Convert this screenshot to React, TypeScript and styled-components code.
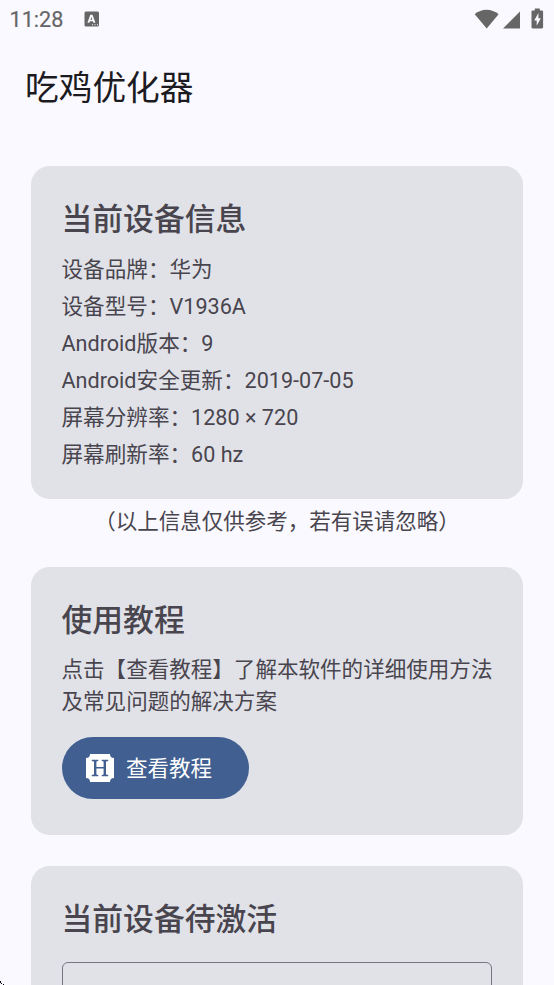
import React from 'react';
import styled, { createGlobalStyle } from 'styled-components';

const GlobalStyle = createGlobalStyle`
  * { box-sizing: border-box; }
  html, body { margin: 0; background: #faf9ff; }
  body {
    overflow: hidden;
    font-family: Roboto, "Noto Sans CJK SC", sans-serif;
    color: #49454e;
    -webkit-font-smoothing: antialiased;
  }
`;

const Screen = styled.div`
  position: relative;
  height: 985px;
  overflow: hidden;
  display: flex;
  flex-direction: column;
`;

const StatusBar = styled.header`
  flex: none;
  height: 37px;
  padding: 0 10px 0 9.5px;
  display: flex;
  align-items: center;
  color: #666;
`;

const Clock = styled.span`
  width: 74.5px;
  font-size: 21.6px;
  font-weight: 400;
  -webkit-text-stroke: 0.2px currentColor;
  line-height: 37px;
  padding-top: 2px;
`;

const StatusIcons = styled.div`
  margin-left: auto;
  display: flex;
`;

const TopBar = styled.h1`
  flex: none;
  height: 98.5px;
  margin: 0;
  padding: 3px 25px 0;
  font-size: 33.7px;
  font-weight: 400;
  line-height: 98.5px;
  color: #1b1b21;
`;

const Content = styled.main`
  flex: none;
  padding: 30.5px 31px 0;
`;

const Card = styled.section<{ $height: number; $gap?: number }>`
  height: ${(p) => p.$height}px;
  margin-bottom: ${(p) => p.$gap ?? 0}px;
  padding: 32px 30.5px 0;
  border-radius: 18.5px;
  background: #e1e2e8;
`;

const CardTitle = styled.h2`
  margin: 0 0 10px;
  font-size: 30.8px;
  font-weight: 500;
  line-height: 43px;
`;

const InfoRow = styled.div`
  height: 37px;
  font-size: 21.6px;
  line-height: 37px;
  white-space: nowrap;
`;

const Note = styled.p`
  height: 68px;
  margin: 0;
  padding-top: 7px;
  font-size: 21.5px;
  line-height: 32px;
  text-align: center;
`;

const Paragraph = styled.p`
  margin: 12.5px -4px 20px 0;
  font-size: 21.55px;
  line-height: 31.5px;
`;

const TutorialButton = styled.button`
  display: flex;
  align-items: center;
  gap: 12px;
  width: 187.5px;
  height: 61.5px;
  padding: 0 0 0 24.5px;
  border: 0;
  border-radius: 31px;
  background: #415f91;
  color: #fff;
  font: inherit;
  font-size: 21.5px;
  line-height: 32px;
`;

const ButtonLabel = styled.span`
  padding-top: 2px;
`;

const CodeField = styled.input`
  display: block;
  width: 430.5px;
  height: 86px;
  margin-top: 21px;
  border: 1.5px solid #74777f;
  border-radius: 6px;
  background: transparent;
`;

const CornerMark = styled.svg`
  position: absolute;
  left: 0;
  bottom: 0;
`;

const deviceInfo: [string, string][] = [
  ['设备品牌', '华为'],
  ['设备型号', 'V1936A'],
  ['Android版本', '9'],
  ['Android安全更新', '2019-07-05'],
  ['屏幕分辨率', '1280 × 720'],
  ['屏幕刷新率', '60 hz'],
];

const KeyboardIcon = () => (
  <svg width="16" height="16" viewBox="0 0 16 16">
    <path
      fill="currentColor"
      fillRule="evenodd"
      d="M2 .5h11.5a1.5 1.5 0 0 1 1.5 1.5v12a1.5 1.5 0 0 1-1.5 1.5H2A1.5 1.5 0 0 1 .5 14V2A1.5 1.5 0 0 1 2 .5ZM6.3 3.8 3.4 11.8h2l.5-1.5h3l.5 1.5h2L8.5 3.8ZM7.4 6l.9 2.8H6.5ZM8 13.3v1h1v-1Zm2.5 0v1h1v-1Zm2.5 0v1h1v-1Z"
    />
  </svg>
);

const SystemIcons = () => (
  <svg width="70" height="22" viewBox="0 0 70 22" fill="currentColor">
    <path d="M.7 6.2C7.2.2 17.8.2 24.6 6.2L12.7 20.5Z" />
    <path d="M29 20.5 46 3.5v17Z" />
    <path
      fillRule="evenodd"
      d="M60.8.5h5v2h2.1c.7 0 1.2.5 1.2 1.2v15.6c0 .7-.5 1.2-1.2 1.2h-9.2c-.7 0-1.2-.5-1.2-1.2V3.7c0-.7.5-1.2 1.2-1.2h2.1ZM64.4 5l-4.2 7.5h2.5v5.2l4.1-7.5h-2.4Z"
    />
  </svg>
);

const TutorialIcon = () => (
  <svg width="28" height="28" viewBox="0 0 28 28">
    <path fill="#fff" d="M4 0h20a4 4 0 0 0 4 4v20a4 4 0 0 0-4 4H4a4 4 0 0 0-4-4V4a4 4 0 0 0 4-4Z" />
    <path
      fill="#415f91"
      d="M5.7 5.8h6.6v1.1l-1.9.5v5.7h7.2V7.4l-1.9-.5V5.8h6.6v1.1l-2.3.5v13.2l2.3.5v1.1h-6.6v-1.1l1.9-.5v-6.2h-7.2v6.2l1.9.5v1.1H5.7v-1.1l2.3-.5V7.4l-2.3-.5Z"
    />
  </svg>
);

export default function App() {
  return (
    <>
      <GlobalStyle />
      <Screen>
        <StatusBar>
          <Clock>11:28</Clock>
          <KeyboardIcon />
          <StatusIcons>
            <SystemIcons />
          </StatusIcons>
        </StatusBar>
        <TopBar>吃鸡优化器</TopBar>
        <Content>
          <Card $height={332.5}>
            <CardTitle>当前设备信息</CardTitle>
            {deviceInfo.map(([label, value]) => (
              <InfoRow key={label}>
                {label}：{value}
              </InfoRow>
            ))}
          </Card>
          <Note>（以上信息仅供参考，若有误请忽略）</Note>
          <Card $height={268} $gap={31}>
            <CardTitle>使用教程</CardTitle>
            <Paragraph>
              点击【查看教程】了解本软件的详细使用方法
              <br />
              及常见问题的解决方案
            </Paragraph>
            <TutorialButton>
              <TutorialIcon />
              <ButtonLabel>查看教程</ButtonLabel>
            </TutorialButton>
          </Card>
          <Card $height={320}>
            <CardTitle>当前设备待激活</CardTitle>
            <CodeField aria-label="激活码" />
          </Card>
        </Content>
        <CornerMark width="4" height="4" viewBox="0 0 4 4" shapeRendering="crispEdges">
          <path d="M0 0h1v2H0ZM1 2h1v1H1ZM3 3h1v1H3Z" />
        </CornerMark>
      </Screen>
    </>
  );
}
